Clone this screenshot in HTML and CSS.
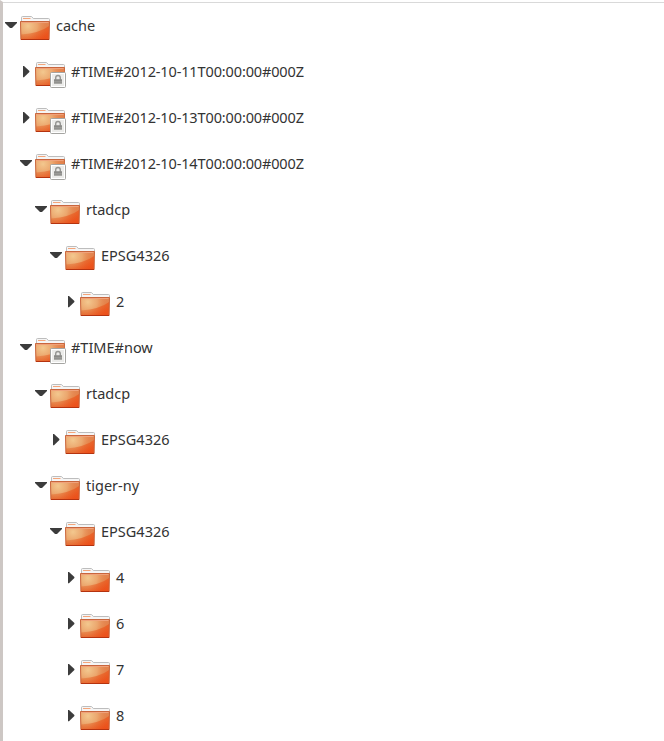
FILE: index.html
```
<!DOCTYPE html>
<html lang="en">
<head>
<meta charset="utf-8">
<title>cache</title>
<link rel="stylesheet" href="styles.css">
</head>
<body>
<svg class="defs" width="0" height="0" aria-hidden="true">
  <defs>
    <linearGradient id="body" x1="0" y1="0" x2="0" y2="1"><stop offset="0" stop-color="#e08a58"/><stop offset=".5" stop-color="#e28246"/><stop offset="1" stop-color="#e35522"/></linearGradient>
    <radialGradient id="glow" gradientUnits="userSpaceOnUse" cx="8" cy="10" r="23"><stop offset="0" stop-color="#f3c88f"/><stop offset=".4" stop-color="#eeb077" stop-opacity=".8"/><stop offset="1" stop-color="#e9642b" stop-opacity="0"/></radialGradient>
    <linearGradient id="shade" x1="0" y1="0" x2="1" y2=".5"><stop offset="0" stop-color="#dc7030" stop-opacity=".25"/><stop offset="1" stop-color="#ee4d16" stop-opacity=".75"/></linearGradient>
    <linearGradient id="metal" x1="0" y1="0" x2="0" y2="1"><stop offset="0" stop-color="#8b8b88"/><stop offset="1" stop-color="#b4b4b0"/></linearGradient>
    <symbol id="folder" viewBox="0 0 30 25">
      <path d="M1.5 6V1.5q0-1 1-1H11q.7 0 1.2.6l1.1 1.4H28.5q1 0 1 1V6z" fill="#f5f5f5" stroke="#bdbdbd"/>
      <path d="M3 2.5H10.5" stroke="#f4a57a"/>
      <path d="M.5 5.5h29l-.4 18.2H.9z" fill="url(#body)"/>
      <path d="M.5 5.5h29l-.4 18.2H.9z" fill="url(#glow)"/>
      <path d="M1 18.5Q20 17 29 10v13H1z" fill="url(#shade)"/>
      <path d="M.5 5.5h29l-.4 18H.9z" fill="none" stroke="#c9663d"/>
      <path d="M1.5 6.5h27" stroke="#f0a27b"/>
      <path d="M1 23.5h28" stroke="#b5330f"/>
    </symbol>
    <symbol id="lock" viewBox="0 0 16 16">
      <rect x=".5" y=".5" width="15" height="15" rx="1" fill="#ececea" stroke="#a5a5a2"/>
      <rect x="1.5" y="1.5" width="13" height="13" fill="none" stroke="#fff"/>
      <path d="M5.7 8V5.8a2.3 2.3 0 0 1 4.6 0V8" fill="none" stroke="#969693" stroke-width="1.4"/>
      <path d="M4 7.2h8V12H4z" fill="url(#metal)"/>
      <path d="M4 8.7h8M4 10.7h8" stroke="#83837f" stroke-width=".7"/>
    </symbol>
    <symbol id="open" viewBox="0 0 15 12"><path d="M0 2H12V3L7 8H5L0 3z" fill="#3c3c3c"/></symbol>
    <symbol id="closed" viewBox="0 0 15 12"><path d="M3 0H4L9.4 5V6L4 11.2H3z" fill="#3c3c3c"/></symbol>
  </defs>
</svg>
<main class="tree" id="tree"></main>
<script src="tree.js"></script>
</body>
</html>
```

FILE: styles.css
```
* { box-sizing: border-box; }
body { margin: 0; background: #fff; overflow: hidden; }
.defs { position: absolute; }
.tree {
  height: 741px;
  padding: 1px 0 0 2px;
  overflow: hidden;
  border-left: 3px solid #cdc7c4;
  border-top: 2px solid #fff;
  box-shadow: inset 0 1px #d9d9d9;
}
.row { display: flex; align-items: center; height: 46px; }
.level-1 { padding-left: 15px; }
.level-2 { padding-left: 30px; }
.level-3 { padding-left: 45px; }
.level-4 { padding-left: 60px; }
.arrow { width: 15px; height: 12px; margin-top: -1px; }
.icon { position: relative; width: 30px; height: 25px; margin-top: 5px; }
.folder { display: block; width: 30px; height: 25px; }
.lock { position: absolute; left: 15px; top: 10px; width: 16px; height: 16px; }
.label {
  margin: -2px 0 0 6px;
  color: #333;
  font: 14.5px/20px "Noto Sans", sans-serif;
  white-space: nowrap;
}
.dated { letter-spacing: -0.13px; }
```

FILE: tree.js
```
const rows = [
  [0, "open", "cache"],
  [1, "closed", "#TIME#2012-10-11T00:00:00#000Z", true],
  [1, "closed", "#TIME#2012-10-13T00:00:00#000Z", true],
  [1, "open", "#TIME#2012-10-14T00:00:00#000Z", true],
  [2, "open", "rtadcp"],
  [3, "open", "EPSG4326"],
  [4, "closed", "2"],
  [1, "open", "#TIME#now", true],
  [2, "open", "rtadcp"],
  [3, "closed", "EPSG4326"],
  [2, "open", "tiger-ny"],
  [3, "open", "EPSG4326"],
  [4, "closed", "4"],
  [4, "closed", "6"],
  [4, "closed", "7"],
  [4, "closed", "8"]
];
document.getElementById("tree").innerHTML = rows.map(([level, state, name, locked]) => `
  <div class="row level-${level}">
    <svg class="arrow"><use href="#${state}"/></svg>
    <span class="icon"><svg class="folder"><use href="#folder"/></svg>${locked ? '<svg class="lock"><use href="#lock"/></svg>' : ""}</span>
    <span class="label${name.length > 20 ? " dated" : ""}">${name}</span>
  </div>`).join("");
```
